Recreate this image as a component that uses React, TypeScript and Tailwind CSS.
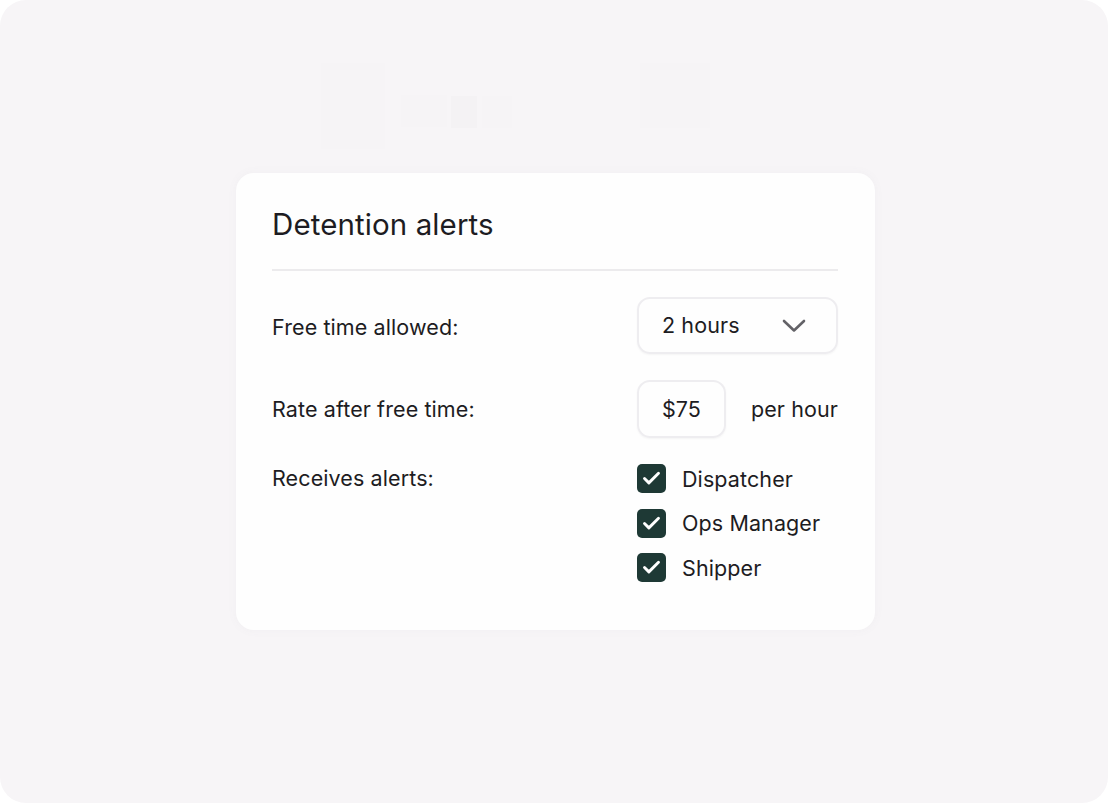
import { Check } from 'lucide-react'

const recipients = ['Dispatcher', 'Ops Manager', 'Shipper']

export default function App() {
  return (
    <div className="h-[803px] w-[1108px] bg-white font-['Inter',sans-serif] text-[#1d1c22]">
      <div className="relative flex size-full items-center justify-center overflow-hidden rounded-[26px] bg-[#f7f5f7]">
        {/* faint ghost shapes behind the card */}
        <div className="absolute left-[321px] top-[63px] h-[86px] w-[64px] bg-[#f6f4f6]" />
        <div className="absolute left-[401px] top-[95px] h-[32px] w-[46px] bg-[#f6f4f6]" />
        <div className="absolute left-[451px] top-[96px] h-[32px] w-[26px] bg-[#f4f2f4]" />
        <div className="absolute left-[482px] top-[96px] h-[32px] w-[30px] bg-[#f6f4f6]" />
        <div className="absolute left-[640px] top-[63px] h-[65px] w-[70px] bg-[#f6f4f6]" />

        <div className="relative ml-[3px] flex w-[639px] flex-col rounded-[18px] bg-[#fefefe] pb-[48px] pl-[36px] pr-[37px] pt-[32px] shadow-[0_0_10px_rgba(120,110,140,0.05)]">
          <h2 className="text-[29.5px] leading-[38px] font-normal tracking-[0.1px]">Detention alerts</h2>
          <div className="mt-[26px] h-[2px] bg-[#ecebed]" />

          <div className="mt-[26px] flex items-center justify-between">
            <span className="pt-[4px] text-[21.5px] tracking-[0.1px]">Free time allowed:</span>
            <div className="flex h-[57px] w-[201px] items-center justify-between rounded-[13px] border-2 border-[#eeedf0] pl-[23px] pr-[30px] shadow-[0_1px_2px_rgba(0,0,0,0.04)]">
              <span className="text-[21.5px] tracking-[0.1px]">2 hours</span>
              <svg width="24" height="14" viewBox="0 0 24 14" fill="none" className="text-[#636267]">
                <polyline points="2,2 12,11.5 22,2" stroke="currentColor" strokeWidth="2.6" strokeLinecap="round" strokeLinejoin="round" />
              </svg>
            </div>
          </div>

          <div className="mt-[26px] flex items-center justify-between">
            <span className="text-[21.5px] tracking-[0.1px]">Rate after free time:</span>
            <div className="flex w-[201px] items-center justify-between">
              <div className="flex h-[58px] w-[89px] items-center justify-center rounded-[13px] border-2 border-[#eeedf0] text-[21.5px] shadow-[0_1px_2px_rgba(0,0,0,0.04)]">
                $75
              </div>
              <span className="text-[21.5px] tracking-[0.1px]">per hour</span>
            </div>
          </div>

          <div className="mt-[26px] flex items-start justify-between">
            <span className="text-[21.5px] leading-[28px] tracking-[0.1px]">Receives alerts:</span>
            <div className="flex w-[201px] flex-col gap-[15.5px]">
              {recipients.map((name) => (
                <label key={name} className="flex items-center gap-[16px]">
                  <span className="flex size-[29px] items-center justify-center rounded-[5px] bg-[#1e3935]">
                    <Check size={21} strokeWidth={3.3} className="text-white" />
                  </span>
                  <span className="text-[21.5px] leading-[28px] tracking-[0.1px]">{name}</span>
                </label>
              ))}
            </div>
          </div>
        </div>
      </div>
    </div>
  )
}
